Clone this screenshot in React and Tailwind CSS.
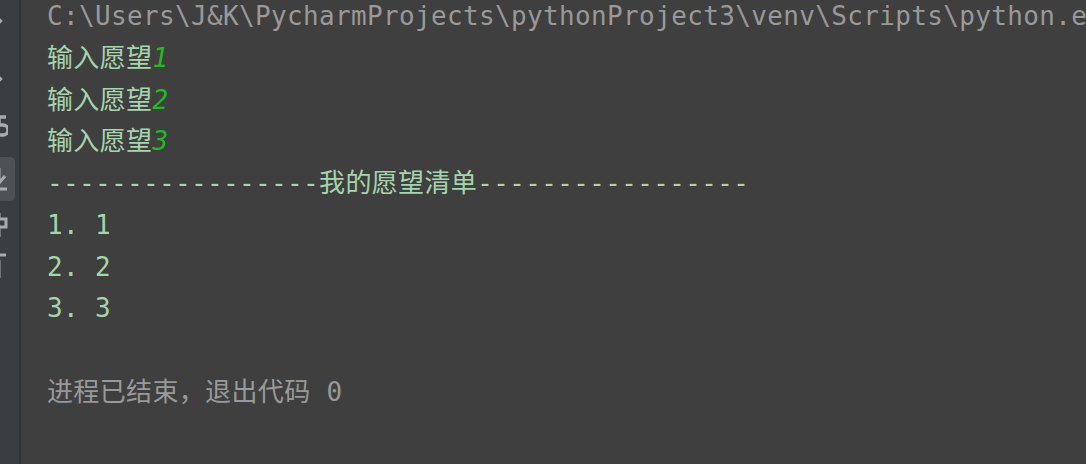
import React from 'react';

const lines = [
  { type: 'path', text: 'C:\\Users\\J&K\\PycharmProjects\\pythonProject3\\venv\\Scripts\\python.exe "C:/Users/J&K/PycharmProjects/pythonProject3/main.py"' },
  { type: 'input', text: '输入愿望', value: '1' },
  { type: 'input', text: '输入愿望', value: '2' },
  { type: 'input', text: '输入愿望', value: '3' },
  { type: 'out', text: '-----------------我的愿望清单-----------------' },
  { type: 'out', text: '1. 1' },
  { type: 'out', text: '2. 2' },
  { type: 'out', text: '3. 3' },
  { type: 'blank', text: '' },
  { type: 'sys', text: '进程已结束，退出代码 0' },
];

const Sidebar = () => (
  <div className="w-[21px] shrink-0 h-full bg-[#3b3e40] relative overflow-hidden border-r-2 border-[#303234]">
    {/* clipped toolbar icons, only the right edges show */}
    <div className="flex flex-col text-[#a9abad]">
      <svg className="mt-[16px] -ml-[12px]" width="16" height="10" viewBox="0 0 16 10">
        <path d="M2 5h10M10 2l3 3-3 3" stroke="currentColor" strokeWidth="2.5" fill="none" />
      </svg>
      <svg className="mt-[48px] -ml-[12px]" width="16" height="10" viewBox="0 0 16 10">
        <path d="M2 5h10M10 2l3 3-3 3" stroke="currentColor" strokeWidth="2.5" fill="none" />
      </svg>
      <svg className="mt-[30px] -ml-[10px]" width="18" height="24" viewBox="0 0 18 24">
        <path d="M16 3H9v8h4a5 5 0 0 1 0 10H8" stroke="currentColor" strokeWidth="3.5" fill="none" />
      </svg>
      <div className="mt-[19px] w-[15px] h-[44px] bg-[#4e5254] rounded-r-[5px] flex items-center">
        <svg className="-ml-[10px]" width="18" height="26" viewBox="0 0 18 26">
          <path d="M9 2v14M3 10l6 7 6-7M1 23h16" stroke="currentColor" strokeWidth="3" fill="none" />
        </svg>
      </div>
      <svg className="mt-[10px] -ml-[10px]" width="18" height="28" viewBox="0 0 18 28">
        <path d="M9 2v6M4 8h12v8H4zM9 16v10" stroke="currentColor" strokeWidth="3" fill="none" />
        <rect x="11" y="10" width="3" height="3" fill="#3b3e40" />
      </svg>
      <svg className="mt-[13px] -ml-[10px]" width="18" height="28" viewBox="0 0 18 28">
        <path d="M2 3h14M9 8v18" stroke="currentColor" strokeWidth="3" fill="none" />
      </svg>
    </div>
  </div>
);

const App = () => {
  return (
    <div className="w-[1086px] h-[464px] flex bg-[#3f3f3f] overflow-hidden">
      <Sidebar />
      <div
        className="flex-1 pl-[26px] -mt-[4px] overflow-hidden text-[26px] leading-[41.75px] tracking-[0.35px] whitespace-pre"
        style={{ fontFamily: '"DejaVu Sans Mono", "Noto Sans CJK SC", monospace' }}
      >
        {lines.map((line, i) => {
          if (line.type === 'path') {
            return <div key={i} className="text-[#999999]">{line.text}</div>;
          }
          if (line.type === 'input') {
            return (
              <div key={i} className="text-[#a5d4ad]">
                {line.text}
                <span className="italic text-[#22b922]">{line.value}</span>
              </div>
            );
          }
          if (line.type === 'sys') {
            return <div key={i} className="text-[#999999]">{line.text}</div>;
          }
          if (line.type === 'blank') {
            return <div key={i} className="h-[41.75px]" />;
          }
          return <div key={i} className="text-[#a5d4ad]">{line.text}</div>;
        })}
      </div>
    </div>
  );
};

export default App;
